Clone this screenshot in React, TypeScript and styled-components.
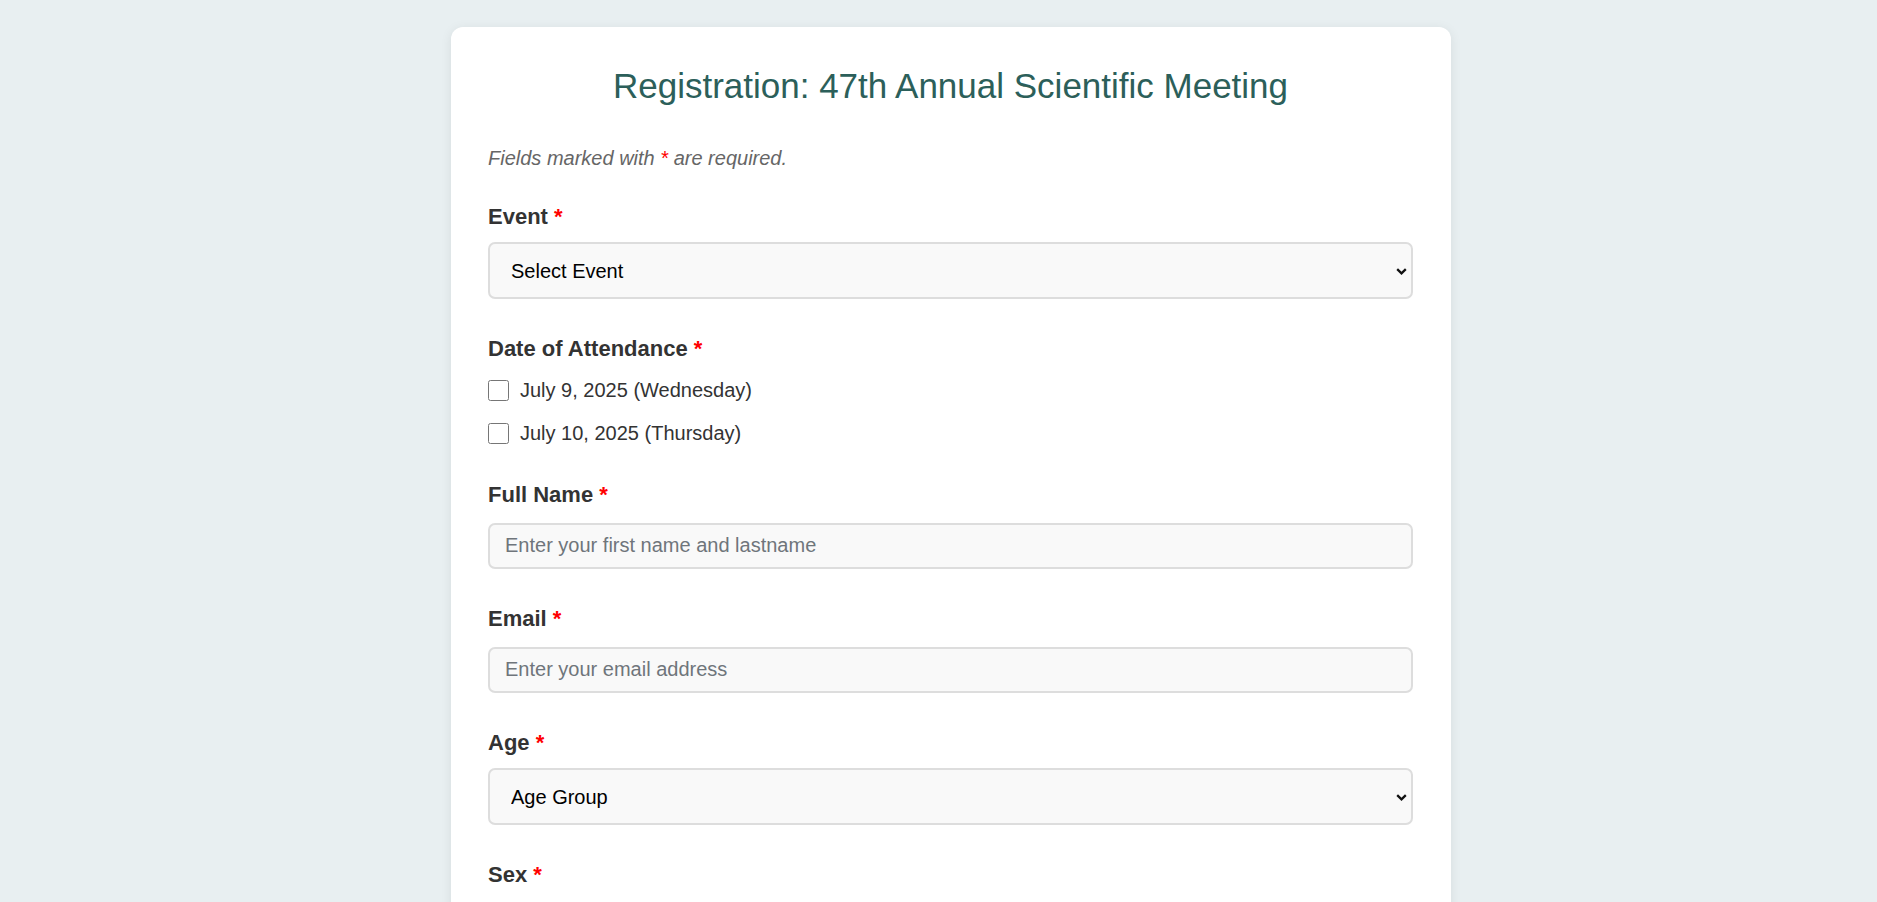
import React from 'react';
import styled, { createGlobalStyle } from 'styled-components';

const GlobalStyle = createGlobalStyle`
  html, body {
    margin: 0;
    padding: 0;
    background: #e8eff1;
    font-family: "Liberation Sans", Arial, sans-serif;
  }
`;

const Page = styled.div`
  min-height: 100vh;
  padding: 27px 0 40px 25px;
  box-sizing: border-box;
`;

const Card = styled.form`
  width: 1000px;
  margin: 0 auto;
  padding: 39px 38px 40px 37px;
  box-sizing: border-box;
  background: #fff;
  border-radius: 12px;
  box-shadow: 0 2px 12px rgba(0, 0, 0, 0.08);
`;

const Title = styled.h1`
  margin: 0 0 41px;
  text-align: center;
  font-size: 35px;
  font-weight: normal;
  color: #2c5f5a;
`;

const Note = styled.p`
  margin: 0 0 33.5px;
  font-size: 20px;
  font-style: italic;
  color: #666;
`;

const Fields = styled.div`
  display: flex;
  flex-direction: column;
  gap: 37px;
`;

const Group = styled.div`
  display: flex;
  flex-direction: column;
`;

const Label = styled.label<{ $space?: number }>`
  display: block;
  margin-bottom: ${p => (p.$space ?? 15)}px;
  font-size: 22px;
  font-weight: bold;
  color: #333;
`;

const Req = styled.span`
  color: red;
`;

const SelectWrap = styled.div`
  position: relative;
`;

const Select = styled.select`
  display: block;
  width: 100%;
  height: 57px;
  padding: 0 30px 0 21px;
  box-sizing: border-box;
  border: 2px solid #ddd;
  border-radius: 7px;
  background: #f9f9f9;
  font-family: inherit;
  font-size: 20px;
  color: #000;
  appearance: none;
  -webkit-appearance: none;
`;

const Chevron = styled.svg`
  position: absolute;
  right: 6px;
  top: 50%;
  width: 11px;
  height: 7px;
  margin-top: -3px;
  pointer-events: none;
`;

const Input = styled.input`
  width: 100%;
  height: 46px;
  padding: 0 15px;
  box-sizing: border-box;
  border: 2px solid #ddd;
  border-radius: 7px;
  background: #f9f9f9;
  font-family: inherit;
  font-size: 20px;
  color: #333;

  &::placeholder {
    color: #6f757b;
  }
`;

const Options = styled.div`
  display: flex;
  flex-direction: column;
  gap: 20px;
`;

const Option = styled.label`
  display: flex;
  align-items: center;
  gap: 11px;
  height: 23px;
  font-size: 20px;
  color: #333;
`;

const Box = styled.input`
  width: 21px;
  height: 21px;
  margin: 0;
`;

const Required = () => <Req>*</Req>;

const Dropdown = ({ id, children }: { id: string; children: React.ReactNode }) => (
  <SelectWrap>
    <Select id={id} defaultValue="">
      {children}
    </Select>
    <Chevron viewBox="0 0 11 7">
      <polyline points="1.2,1.2 5.5,5.3 9.8,1.2" fill="none" stroke="#111" strokeWidth="2.3" />
    </Chevron>
  </SelectWrap>
);

export default function App() {
  return (
    <>
      <GlobalStyle />
      <Page>
        <Card onSubmit={e => e.preventDefault()}>
          <Title>Registration: 47th Annual Scientific Meeting</Title>
          <Note>
            Fields marked with <Req>*</Req> are required.
          </Note>
          <Fields>
            <Group>
              <Label htmlFor="event" $space={12.5}>
                Event <Required />
              </Label>
              <Dropdown id="event">
                <option value="">Select Event</option>
                <option value="asm47">47th Annual Scientific Meeting</option>
              </Dropdown>
            </Group>

            <Group>
              <Label as="div" $space={16.5}>
                Date of Attendance <Required />
              </Label>
              <Options>
                <Option>
                  <Box type="checkbox" name="date" value="2025-07-09" />
                  July 9, 2025 (Wednesday)
                </Option>
                <Option>
                  <Box type="checkbox" name="date" value="2025-07-10" />
                  July 10, 2025 (Thursday)
                </Option>
              </Options>
            </Group>

            <Group>
              <Label htmlFor="name">
                Full Name <Required />
              </Label>
              <Input id="name" type="text" placeholder="Enter your first name and lastname" />
            </Group>

            <Group>
              <Label htmlFor="email">
                Email <Required />
              </Label>
              <Input id="email" type="email" placeholder="Enter your email address" />
            </Group>

            <Group>
              <Label htmlFor="age" $space={12.5}>
                Age <Required />
              </Label>
              <Dropdown id="age">
                <option value="">Age Group</option>
                <option>Under 30</option>
                <option>30 - 44</option>
                <option>45 - 59</option>
                <option>60 and above</option>
              </Dropdown>
            </Group>

            <Group>
              <Label as="div" $space={16.5}>
                Sex <Required />
              </Label>
              <Options>
                <Option>
                  <Box type="radio" name="sex" value="male" />
                  Male
                </Option>
                <Option>
                  <Box type="radio" name="sex" value="female" />
                  Female
                </Option>
              </Options>
            </Group>
          </Fields>
        </Card>
      </Page>
    </>
  );
}
